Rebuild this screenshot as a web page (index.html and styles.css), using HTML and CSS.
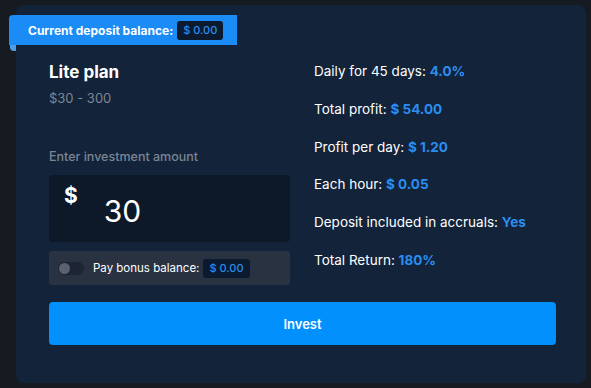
FILE: index.html
```html
<!DOCTYPE html>
<html lang="en">
<head>
	<meta charset="UTF-8">
	<title>Lite plan</title>
	<link rel="stylesheet" href="styles.css">
</head>
<body>
	<div class="card">
		<!--balance ribbon-->
		<div class="ribbon">
			Current deposit balance: <span class="chip">$ 0.00</span>
		</div>
		<div class="cols">
			<div class="left">
				<div class="title">Lite plan</div>
				<div class="range">$30 - 300</div>
				<div class="label">Enter investment amount</div>
				<div class="amount">
					<span class="cur">$</span>
					<span class="val">30</span>
				</div>
				<div class="bonus">
					<span class="toggle"><i></i></span>
					Pay bonus balance: <span class="chip">$ 0.00</span>
				</div>
			</div>
			<ul class="right">
				<li>Daily for 45 days: <b>4.0%</b></li>
				<li>Total profit: <b>$ 54.00</b></li>
				<li>Profit per day: <b>$ 1.20</b></li>
				<li>Each hour: <b>$ 0.05</b></li>
				<li>Deposit included in accruals: <b>Yes</b></li>
				<li>Total Return: <b>180%</b></li>
			</ul>
		</div>
		<button class="invest">Invest</button>
	</div>
</body>
</html>
```

FILE: styles.css
```css
*{
	margin:0;
	padding:0;
	box-sizing:border-box;
}

body{
	background:#161a21;
	font-family:Inter,"Open Sans",sans-serif;
	padding:5px 0 0 16px;
	width:591px;
	height:388px;
	overflow:hidden;
}

.card{
	position:relative;
	width:570px;
	height:378px;
	background:#12233a;
	border-radius:8px;
	padding:56px 30px 0 33px;
}

.ribbon{
	position:absolute;
	left:-7px;
	top:10px;
	width:228px;
	height:30px;
	background:#1b8cf5;
	border-radius:4px 0 0 0;
	color:#fff;
	font-size:12px;
	font-weight:700;
	display:flex;
	align-items:center;
	padding-left:19px;
	gap:4px;
}
.ribbon::after{
	content:"";
	position:absolute;
	left:1px;
	bottom:-6px;
	width:6px;
	height:6px;
	border-radius:0 0 0 4px;
	background:#4a9fe8;
}

.chip{
	display:inline-block;
	background:#0b1a2e;
	color:#2a8ef0;
	font-size:11px;
	font-weight:500;
	padding:3px 6px;
	border-radius:3px;
	line-height:13px;
}

.cols{
	display:grid;
	grid-template-columns:241px 1fr;
	gap:24px;
	align-items:start;
}

.title{
	color:#fff;
	font-size:17px;
	font-weight:700;
	line-height:22px;
}
.range{
	color:#7b8593;
	font-size:13px;
	margin-top:6px;
	line-height:18px;
}
.label{
	color:#7b8593;
	font-size:12.5px;
	font-weight:500;
	margin-top:42px;
	line-height:16px;
}

.amount{
	margin-top:10px;
	height:67px;
	background:#0d1828;
	border-radius:4px;
	display:flex;
	color:#fff;
	padding:8px 0 0 15px;
}
.cur{
	font-size:21px;
	font-weight:700;
	line-height:26px;
}
.val{
	font-size:30px;
	line-height:36px;
	margin:10px 0 0 26px;
}

.bonus{
	margin-top:9px;
	height:34px;
	background:#293241;
	border-radius:3px;
	display:flex;
	align-items:center;
	padding-left:9px;
	color:#fff;
	font-size:11.5px;
	gap:4px;
}
.toggle{
	width:26px;
	height:13px;
	border-radius:7px;
	background:#1e2532;
	margin-right:5px;
	position:relative;
}
.toggle i{
	position:absolute;
	left:1px;
	top:1px;
	width:11px;
	height:11px;
	border-radius:50%;
	background:#5a6271;
}

.right{
	list-style:none;
	color:#fff;
	font-size:13.5px;
	padding-top:1px;
}
.right li{
	line-height:18px;
	margin-bottom:19.8px;
}
.right li:last-child{
	margin-bottom:0;
}
.right b{
	color:#2a8ef0;
	font-weight:700;
}

.invest{
	display:block;
	margin-top:17px;
	width:507px;
	height:43px;
	background:#0290fd;
	border:none;
	border-radius:4px;
	color:#fff;
	font-family:inherit;
	font-size:13px;
	font-weight:600;
}
```
